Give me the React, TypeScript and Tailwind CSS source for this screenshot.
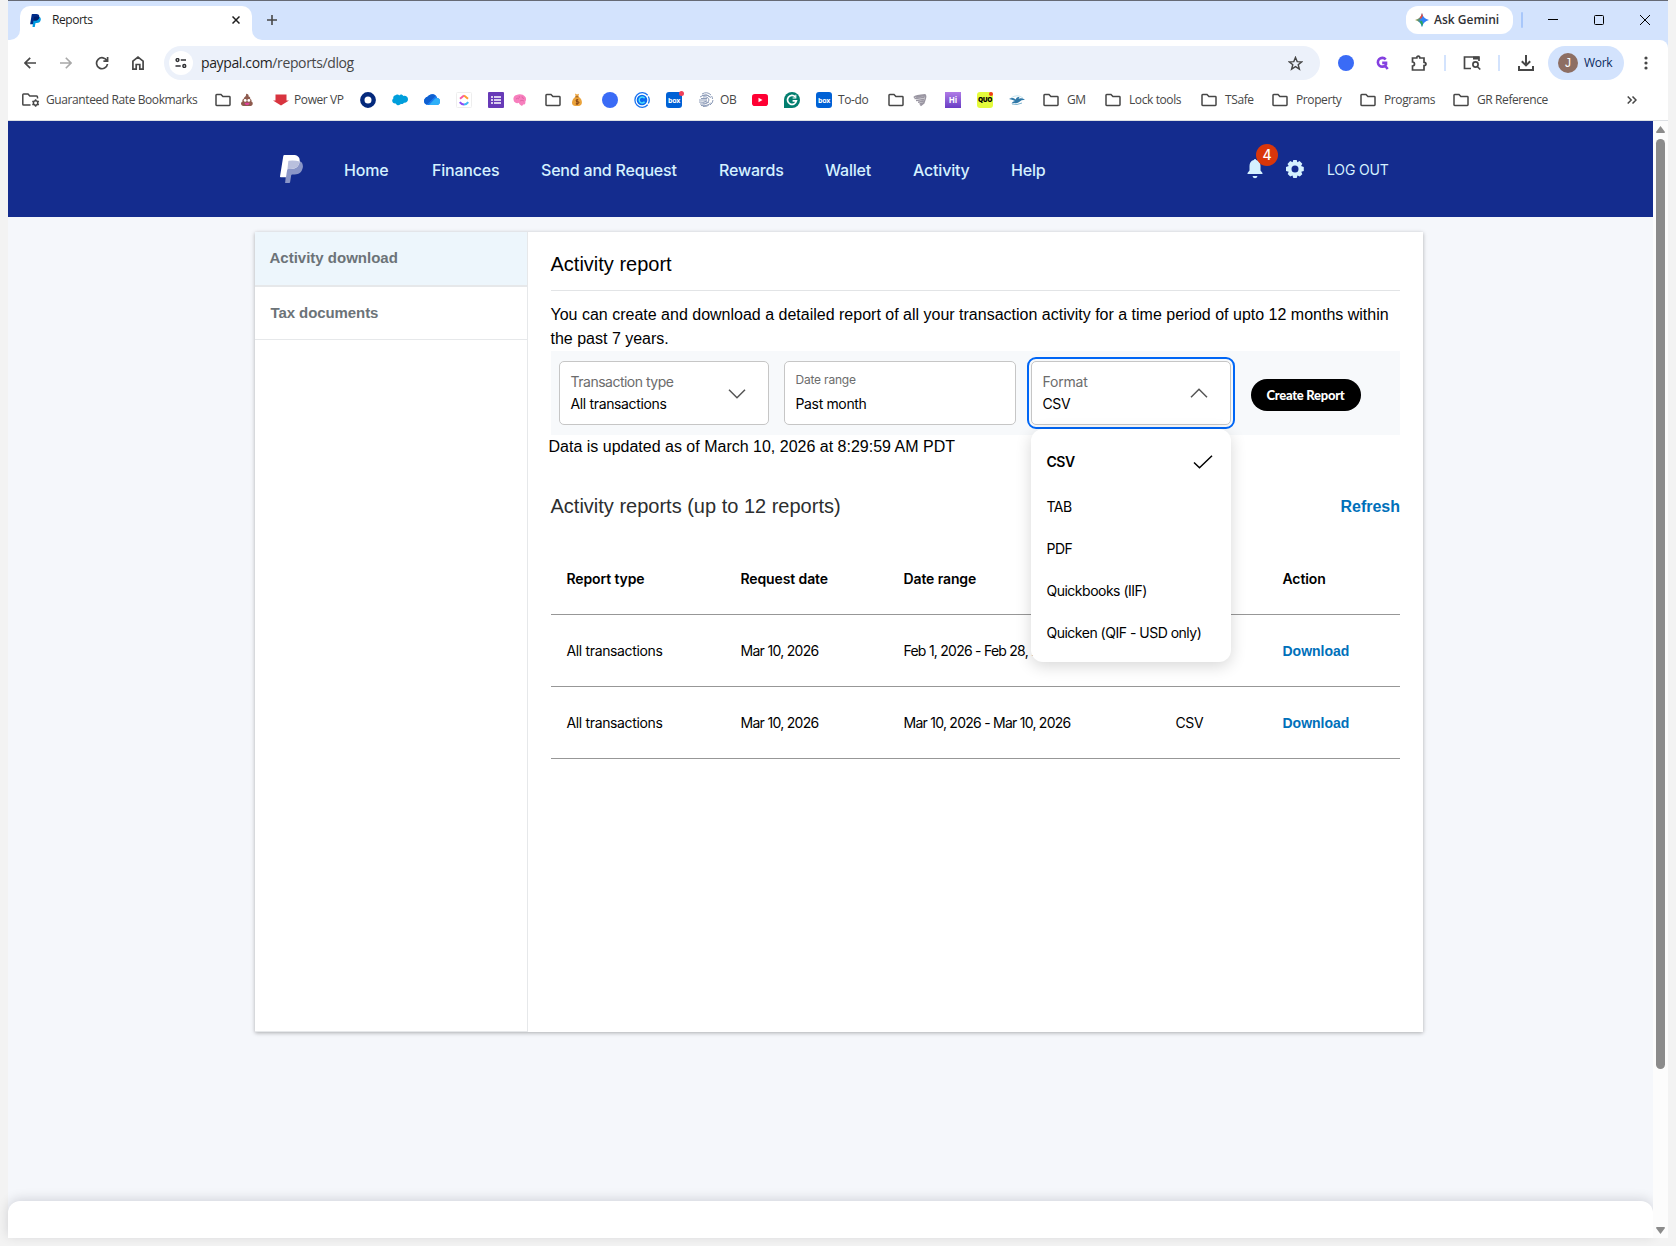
import React from "react";
import { clsx } from "clsx";

const stroke = { fill: "none", stroke: "#474747", strokeWidth: 1.7 };

function FolderIcon() {
  return (
    <svg width="16" height="16" viewBox="0 0 16 16" {...stroke} strokeWidth={1.5} className="shrink-0">
      <path d="M1 12.2V3.2Q1 2.5 1.7 2.5H6l1.9 2h6.4q.7 0 .7.7v7.6q0 .7-.7.7H1.7q-.7 0-.7-.7z" />
    </svg>
  );
}

function ManagedFolderIcon() {
  return (
    <svg width="18" height="16" viewBox="0 0 18 16" {...stroke} strokeWidth={1.5} className="shrink-0">
      <path d="M8.5 13H1.6q-.8 0-.8-.8V2.8Q.8 2 1.6 2H6l1.8 2h6.8q.9 0 .9 1v1.5" />
      <circle cx="13.6" cy="11" r="2.2" />
      <path d="M13.6 7.3v1.4m0 4.6v1.4m-3.2-5.6 1.2.7m4 2.3 1.2.7m0-3.7-1.2.7m-4 2.3-1.2.7" />
    </svg>
  );
}

function PoopIcon() {
  return (
    <svg width="14" height="14" viewBox="0 0 14 14" className="shrink-0">
      <path d="M6 .8c2 .2 3 1.2 2.6 2.6 1.5.3 2 1.4 1.5 2.5 1.5.3 1.8 1.7 1.2 2.7 2 .4 2.2 4.2-.8 4.4h-7C.4 12.8.4 9.2 2.6 8.6 2 7.2 2.6 6.2 3.8 6 3.4 4.2 6.8 3.8 6 .8z" fill="#8d5a4d" />
      <circle cx="5.2" cy="7.4" r="1.400" fill="#fff" />
      <circle cx="8.800" cy="7.400" r="1.400" fill="#fff" />
      <path d="M4.400 9.800h5.400q-.5 2.400-2.700 2.400t-2.700-2.400z" fill="#e0409a" />
    </svg>
  );
}

function PowerIcon() {
  return (
    <svg width="16" height="16" viewBox="0 0 16 16" className="shrink-0">
      <path d="M2.500 2.500h11v6H16l-8 5-8-5h2.500z" fill="#d8343f" />
    </svg>
  );
}

function RingIcon() {
  return (
    <svg width="16" height="16" viewBox="0 0 16 16" className="shrink-0">
      <circle cx="8" cy="8" r="5.700" fill="#fff" stroke="#04297c" strokeWidth="4.400" />
    </svg>
  );
}

function SalesforceIcon() {
  return (
    <svg width="16" height="16" viewBox="0 0 16 16" className="shrink-0">
      <path d="M4 3c1.500-.8 2.700-.2 3.200.5C8.500 2 10.600 2.500 11.200 4c2.400-.8 4.800.8 4.800 3.300 0 2.400-2 3.800-4 3.400-.8 1.200-2.200 1.500-3.200 1-1 2-4.200 2-5-.3C1.800 11.700.2 10.600.2 8.800c0-1 .5-1.800 1.200-2.200C.7 5 2 3.400 4 3z" fill="#009edb" />
    </svg>
  );
}

function OneDriveIcon() {
  return (
    <svg width="16" height="16" viewBox="0 0 16 16" className="shrink-0">
      <path d="M3.500 4.800C6 1 12 1.500 13.300 6c3 .5 3.500 3.500 2.200 5.500-.8 1.200-1.800 1.500-2.800 1.500H4C0 13-1 8.500 1 6.500c.7-.9 1.500-1.500 2.500-1.700z" fill="#1a7cf0" />
      <path d="M3.500 4.800C5.500 2 9.500 1.500 11.800 3.800L2.800 12.700C-.4 11.500-.5 8 1 6.500c.7-.9 1.500-1.500 2.500-1.700z" fill="#0f5fd0" />
      <path d="M5 13l6-6.200q1.500-1.300 3-.6c2.500.8 2.700 3.500 1.500 5.300-.7 1-1.700 1.500-2.700 1.500z" fill="#2fb0f8" />
    </svg>
  );
}

function ClickUpIcon() {
  return (
    <svg width="16" height="16" viewBox="0 0 16 16" fill="none" strokeWidth="2" className="shrink-0">
      <rect x=".5" y=".5" width="15" height="15" rx="1" stroke="#eee" strokeWidth="1" />
      <path d="M4 6.700 8 3.400" stroke="#f85aa8" />
      <path d="M8 3.400l4 3.300" stroke="#ff9b2e" />
      <path d="M3.800 10.200q1.700 2.400 4.200 2.400" stroke="#8a4cf5" />
      <path d="M8 12.600q2.500 0 4.200-2.400" stroke="#42b5f5" />
    </svg>
  );
}

function FormsIcon() {
  return (
    <svg width="16" height="16" viewBox="0 0 16 16" className="shrink-0">
      <rect width="16" height="16" rx="1" fill="#673ab7" />
      <path d="M3 5h2m1 0h7M3 8h2m1 0h7M3 11h2m1 0h7" stroke="#fff" strokeWidth="1.700" />
    </svg>
  );
}

function BrainIcon() {
  return (
    <svg width="14" height="14" viewBox="0 0 14 14" className="shrink-0">
      <path d="M.6 7c-.6-2.400.8-4.800 3-5C6.500.5 10.400 1.500 11.700 3.200 13.600 4.800 13.300 7.500 12.300 8.700c.6 1.800-.8 3.300-2.200 2.800-.5 1.500-2.200 1.600-2.500.4C6.400 11.500 6 10.500 6 9.800 4 10.800.9 9.800.6 7z" fill="#f77fbd" />
      <path d="M3 6q1.500-1.500 3 0m0-3q1 1 0 2m3-1.500q0 2 2 2M7 8q2-1.500 4 0" stroke="#d95a9c" strokeWidth=".7" fill="none" />
    </svg>
  );
}

function MoneyBagIcon() {
  return (
    <svg width="14" height="14" viewBox="0 0 14 14" className="shrink-0">
      <path d="M5 .6l2 .8 2-.6-.8 3C11 5 12 7.500 11.900 9.500c0 2.300-1.500 3.500-3.500 3.500H5.500C3.200 13 1.900 11.800 2 9.500 2 7.500 3.500 5 5.700 3.800z" fill="#eba33b" />
      <path d="M5.300 3.800h3.300" stroke="#9c5a1c" strokeWidth="1" />
      <path d="M8.300 6.800q-2.200-.4-2.200 1t2 1 0 2H5.800M7 6v6" stroke="#7c3c12" strokeWidth=".9" fill="none" />
    </svg>
  );
}

function BlueDot() {
  return <span className="size-4 shrink-0 rounded-full bg-[#3a6bf6]" />;
}

function CalendlyIcon() {
  return (
    <svg width="16" height="16" viewBox="0 0 16 16" fill="none" className="shrink-0">
      <path d="M13.700 3.200A7.300 7.300 0 1 0 13.700 12.800" stroke="#1a73f0" strokeWidth="1.300" />
      <path d="M14.300 4.500a7.300 7.300 0 0 1 0 7" stroke="#1a73f0" strokeWidth="1.300" />
      <circle cx="8" cy="8" r="5.300" fill="#0b6bf0" />
      <path d="M10.600 6.200A3 3 0 1 0 10.600 9.800" stroke="#4fe0f8" strokeWidth="1.500" />
    </svg>
  );
}

function BoxIcon({ dot }: { dot?: boolean }) {
  return (
    <span className="relative flex size-4 shrink-0 items-center justify-center rounded-[3px] bg-[#0061d5] font-['Open_Sans',sans-serif] text-[7px] font-bold leading-none tracking-[-0.3px] text-white">
      box
      {dot && <span className="absolute -right-0.5 -top-px size-[5px] rounded-full bg-[#f0405a]" />}
    </span>
  );
}

function GlobeIcon() {
  return (
    <svg width="16" height="16" viewBox="0 0 16 16" fill="none" stroke="#8c9bb8" strokeWidth="1" className="shrink-0">
      <path d="M4 2q5-3 9 1M2 5q6-4 10 0M5 5q5-1 6 3-1 4-6 3M1 8h8M1 10q4 1 8-1M2 12q5 1 9-2M5 14.500q5 1 8-4M12 13q3-2 3-5M13.500 4q1 1 1 3M4 3.500q5-2 9 2M3 6.500h6M3 13.500q4 1 8-1" />
    </svg>
  );
}

function YouTubeIcon() {
  return (
    <svg width="16" height="16" viewBox="0 0 16 16" className="shrink-0">
      <rect y="2" width="16" height="12" rx="2.800" fill="#ff0033" />
      <path d="M6.500 5.700v4.600L10.500 8z" fill="#fff" />
    </svg>
  );
}

function GrammarlyIcon() {
  return (
    <svg width="16" height="16" viewBox="0 0 16 16" fill="none" className="shrink-0">
      <path d="M0 16V8a8 8 0 1 1 8 8z" fill="#027e6f" />
      <path d="M11.300 4.800a4.500 4.500 0 1 0 1.100 4.100H8.600" stroke="#fff" strokeWidth="1.700" />
      <path d="M11.800 2.800v3.200H8.600" stroke="#fff" strokeWidth="1.100" />
    </svg>
  );
}

function TornadoIcon() {
  return (
    <svg width="14" height="14" viewBox="0 0 14 14" fill="none" stroke="#9a96a2" strokeWidth="1.500" className="shrink-0">
      <path d="M.8 4.500Q3 2.300 12 1.800 13.300 3 12 6.500L10.800 10 7.500 12.800M1.500 5.600l10-1M3 7.400l8-.8M5 9.200l5.500-1M6.500 11l4-1M3 3.700l9-.9" />
    </svg>
  );
}

function HiIcon() {
  return (
    <span className="flex size-4 shrink-0 items-center justify-center bg-linear-to-b from-[#b07be6] to-[#6a3cc4] font-['Open_Sans',sans-serif] text-[8px] font-bold leading-none text-white">
      Hi
    </span>
  );
}

function QuoIcon() {
  return (
    <span className="relative flex size-4 shrink-0 items-center justify-center rounded-[3px] bg-[#e4fb3c] font-['Open_Sans',sans-serif] text-[6.5px] font-extrabold leading-none tracking-[-0.5px] text-black">
      QUO
      <span className="absolute right-0 top-0 size-1 rounded-full bg-[#f03a1c]" />
    </span>
  );
}

function BirdIcon() {
  return (
    <svg width="16" height="16" viewBox="0 0 16 16" fill="none" className="shrink-0">
      <path d="M2 6Q8 1.500 14 6" stroke="#b8dcea" strokeWidth=".8" />
      <path d="M0 7q4-2 6.500.5Q8 4 10.500 5.200L9.500 6.800q3-1.300 6.500 1-4 .2-5.500 2-2 2-5 1.200-2 0-3 .6 1-2.400 3.500-2.600Q3 7.600 0 7z" fill="#2f78a8" />
      <path d="M3 12q5 1.500 10-1" stroke="#7fb4d0" strokeWidth="1" />
    </svg>
  );
}

interface Bookmark {
  icon: React.ReactNode;
  extra?: React.ReactNode;
  label?: string;
  width: string;
  text?: string;
}

const bookmarks: Bookmark[] = [
  { icon: <ManagedFolderIcon />, label: "Guaranteed Rate Bookmarks", width: "w-[193px]", text: "ml-1.5" },
  { icon: <FolderIcon />, extra: <PoopIcon />, width: "w-[58px]" },
  { icon: <PowerIcon />, label: "Power VP", width: "w-[87px]", text: "ml-[5px]" },
  { icon: <RingIcon />, width: "w-8" },
  { icon: <SalesforceIcon />, width: "w-8" },
  { icon: <OneDriveIcon />, width: "w-8" },
  { icon: <ClickUpIcon />, width: "w-8" },
  { icon: <FormsIcon />, extra: <BrainIcon />, width: "w-[57px]" },
  { icon: <FolderIcon />, extra: <MoneyBagIcon />, width: "w-[57px]" },
  { icon: <BlueDot />, width: "w-8" },
  { icon: <CalendlyIcon />, width: "w-8" },
  { icon: <BoxIcon dot />, width: "w-8" },
  { icon: <GlobeIcon />, label: "OB", width: "w-[54px]", text: "ml-1.5" },
  { icon: <YouTubeIcon />, width: "w-8" },
  { icon: <GrammarlyIcon />, width: "w-8" },
  { icon: <BoxIcon />, label: "To-do", width: "w-[72px]", text: "ml-1.5" },
  { icon: <FolderIcon />, extra: <TornadoIcon />, width: "w-[57px]" },
  { icon: <HiIcon />, width: "w-8" },
  { icon: <QuoIcon />, width: "w-8" },
  { icon: <BirdIcon />, width: "w-[34px]" },
  { icon: <FolderIcon />, label: "GM", width: "w-[62px]", text: "ml-2" },
  { icon: <FolderIcon />, label: "Lock tools", width: "w-24", text: "ml-2" },
  { icon: <FolderIcon />, label: "TSafe", width: "w-[71px]", text: "ml-2" },
  { icon: <FolderIcon />, label: "Property", width: "w-[88px]", text: "ml-2" },
  { icon: <FolderIcon />, label: "Programs", width: "w-[93px]", text: "ml-2" },
  { icon: <FolderIcon />, label: "GR Reference", width: "w-[174px]", text: "ml-2" },
];

function PayPalMark({ className, front, back, overlap }: { className: string; front: string; back: string; overlap: string }) {
  return (
    <svg viewBox="0 0 23 28" className={className}>
      <path d="M7.500 5.500h9.200c4.300 0 6.800 2.800 6.100 7-.8 4.600-3.700 6.900-8.100 6.900h-2.500q-.8 0-1 .8l-1.100 7q-.1.800-.9.800H5.100z" fill={back} />
      <path d="M4.400 0h8.800c4.600 0 7.100 2.500 6.400 6.800-.8 4.800-3.900 7.200-8.600 7.200H8.200q-.8 0-1 .8l-1.200 7.400H.7q-.8 0-.7-.8L3.300 1Q3.500 0 4.400 0z" fill={front} />
      <path d="M8.800 5.700q5.600-.9 10.800.9c-.6 4.900-3.800 7.400-8.600 7.400H8.200q-.5 0-.8.400L8.300 6.300q0-.5.500-.6z" fill={overlap} />
    </svg>
  );
}

function TabStrip() {
  return (
    <div className="flex h-[39px] bg-[#d3e3fd] pt-[5px]">
      <div className="flex h-[34px] w-3 items-end bg-white">
        <div className="h-full w-3 rounded-br-[10px] bg-[#d3e3fd]" />
      </div>
      <div className="flex h-[34px] w-[232px] items-center rounded-t-[10px] bg-white pb-1.5 pl-2.5 pr-3">
        <PayPalMark className="h-[13px] w-[11px]" front="#002c8a" back="#009be1" overlap="#001f6b" />
        <span className="ml-[11px] flex-1 text-xs tracking-[-0.45px] text-[#1f1f1f]">Reports</span>
        <svg width="8" height="8" viewBox="0 0 8 8" stroke="#1f1f1f" strokeWidth="1.500">
          <path d="M.5.500l7 7m0-7-7 7" />
        </svg>
      </div>
      <div className="h-[34px] w-3 bg-white">
        <div className="h-full w-3 rounded-bl-[10px] bg-[#d3e3fd]" />
      </div>
      <svg width="10" height="10" viewBox="0 0 10 10" stroke="#474747" strokeWidth="1.600" className="ml-[3px] mt-[9px]">
        <path d="M5 0v10M0 5h10" />
      </svg>
      <div className="ml-auto flex h-7 w-[107px] items-center rounded-xl bg-white pl-[9px]">
        <svg width="14" height="14" viewBox="0 0 14 14">
          <defs>
            <linearGradient id="gem" x1="0" x2="1" y1="0" y2=".3">
              <stop offset="0" stopColor="#f6b61d" />
              <stop offset=".4" stopColor="#4f8f7c" />
              <stop offset=".55" stopColor="#3286fb" />
              <stop offset="1" stopColor="#2f7bf5" />
            </linearGradient>
          </defs>
          <path d="M7 0Q8.300 5.700 14 7 8.300 8.300 7 14 5.700 8.300 0 7 5.700 5.700 7 0z" fill="url(#gem)" />
          <path d="M7 0q.3 1.500 1 2.800L6.500 5.500 4.200 5.400Q6.400 3.700 7 0z" fill="#e8483e" />
          <path d="M4.500 8.700 7 7.500l1 3.500Q7.300 12.300 7 14 6.400 10.500 4.500 8.700z" fill="#2ca65a" />
        </svg>
        <span className="ml-[5px] text-xs font-semibold text-[#303134]">Ask Gemini</span>
      </div>
      <div className="ml-2 mt-1.5 h-4 w-0.5 rounded-full bg-[#a8c7fa]" />
      <div className="ml-[25px] mt-[9px] flex w-[120px] gap-9">
        <svg width="10" height="10" viewBox="0 0 10 10" stroke="#000">
          <path d="M0 4.500h10" />
        </svg>
        <svg width="10" height="10" viewBox="0 0 10 10" stroke="#000" fill="none">
          <rect x=".5" y=".5" width="9" height="9" rx="1" />
        </svg>
        <svg width="10" height="10" viewBox="0 0 10 10" stroke="#000">
          <path d="M0 0l10 10m0-10L0 10" />
        </svg>
      </div>
    </div>
  );
}

function Toolbar() {
  return (
    <div className="bg-[#d3e3fd]">
      <div className="flex h-[46px] items-center rounded-tr-lg bg-white pl-4">
        <svg width="12" height="12" viewBox="0 0 12 12" {...stroke}>
          <path d="M12 6H1.200M6.200.8 1 6l5.200 5.200" />
        </svg>
        <svg width="12" height="12" viewBox="0 0 12 12" fill="none" stroke="#a8a8a8" strokeWidth="1.600" className="ml-6">
          <path d="M0 6h10.800M5.800.8 11 6l-5.200 5.200" />
        </svg>
        <svg width="14" height="14" viewBox="0 0 14 14" {...stroke} className="ml-[23px]">
          <path d="M12 4.800A5.500 5.500 0 1 0 12.500 8M12.600 1v4.200H8.400" />
        </svg>
        <svg width="12" height="14" viewBox="0 0 12 14" {...stroke} className="ml-[23px]">
          <path d="M.9 13.100V5.200L6 1.200l5.100 4v7.900H7.800V8.500H4.200v4.600z" />
        </svg>
        <div className="ml-5 flex h-[34px] w-[1156px] items-center rounded-full bg-[#ecf1fa] pl-[5px] pr-[17px]">
          <div className="flex size-6 items-center justify-center rounded-full bg-white">
            <svg width="12" height="10" viewBox="0 0 12 10" fill="none" stroke="#303134" strokeWidth="1.500">
              <circle cx="2.500" cy="2" r="1.400" />
              <path d="M5.800 2H11M.5 8h5.200" />
              <circle cx="9.300" cy="8" r="1.400" />
            </svg>
          </div>
          <span className="ml-2 flex-1 text-sm tracking-[-0.37px] text-[#474747]">
            <span className="text-[#1f1f1f]">paypal.com</span>/reports/dlog
          </span>
          <svg width="15" height="15" viewBox="0 0 15 15" {...stroke} strokeWidth={1.4}>
            <path d="M7.500 1.400l1.700 4.200 4.500.3-3.500 2.900 1.200 4.400-3.900-2.500-3.900 2.500 1.200-4.400L1.300 5.900l4.500-.3z" />
          </svg>
        </div>
        <div className="ml-[18px] flex">
          <BlueDot />
        </div>
        <svg width="13" height="14" viewBox="0 0 13 14" fill="none" stroke="#8440e0" strokeWidth="2.600" className="ml-[22px]">
          <path d="M9.700 3.500A4.400 4.400 0 1 0 10 8.600V6.900H6.200M9.200 10l2.500 3" />
        </svg>
        <svg width="17" height="17" viewBox="0 0 17 17" {...stroke} className="ml-[22px]">
          <path d="M1.500 3h4.300q0-1.800 1.500-1.800T8.800 3H13v4.300q2 .1 2 1.600T13 10.500V15H1.500v-4q2-.2 2-2t-2-2z" />
        </svg>
        <div className="ml-4 h-4 w-0.5 bg-[#d3e3fd]" />
        <svg width="18" height="16" viewBox="0 0 18 16" {...stroke} className="ml-[17px]">
          <path d="M8 13.500H1.500V2H16v4" />
          <path d="M10 3h6" strokeWidth="3" />
          <circle cx="12.500" cy="9.500" r="2.600" />
          <path d="M14.300 11.500l3 3" />
        </svg>
        <div className="ml-[17px] h-4 w-0.5 bg-[#d3e3fd]" />
        <svg width="16" height="16" viewBox="0 0 16 16" {...stroke} strokeWidth={2} className="ml-[18px]">
          <path d="M8 0v10M3.800 6.200 8 10.400l4.200-4.200M1 11v4h14v-4" />
        </svg>
        <div className="ml-3.5 flex h-[34px] w-[76px] items-center rounded-full bg-[#d3e3fd] pl-2.5">
          <span className="flex size-5 items-center justify-center rounded-full bg-[#8d6e63] font-['Liberation_Sans',Arial,sans-serif] text-xs leading-none text-white">
            J
          </span>
          <span className="ml-1.5 text-xs font-medium tracking-[-0.3px] text-[#0a2a5e]">Work</span>
        </div>
        <svg width="4" height="14" viewBox="0 0 4 14" fill="#474747" className="ml-5">
          <circle cx="2" cy="2" r="1.600" />
          <circle cx="2" cy="7" r="1.600" />
          <circle cx="2" cy="12" r="1.600" />
        </svg>
      </div>
    </div>
  );
}

function BookmarkBar() {
  return (
    <div className="flex h-[35px] items-center border-b border-[#dcdfe3] bg-white pb-1.5 pl-3.5">
      {bookmarks.map((b, i) => (
        <div key={i} className={clsx("flex shrink-0 items-center whitespace-nowrap", b.width)}>
          {b.icon}
          {b.extra && <span className="ml-[9px] flex">{b.extra}</span>}
          {b.label && <span className={clsx("text-xs leading-4 tracking-[-0.4px] text-[#474747]", b.text)}>{b.label}</span>}
        </div>
      ))}
      <svg width="10" height="8" viewBox="0 0 10 8" {...stroke} strokeWidth={1.5}>
        <path d="M.7.500 4.200 4 .7 7.500M5.500.500 9 4 5.500 7.500" />
      </svg>
    </div>
  );
}

const navItems = [
  { label: "Home", width: "w-[88px]" },
  { label: "Finances", width: "w-[109px]" },
  { label: "Send and Request", width: "w-[178px]" },
  { label: "Rewards", width: "w-[106px]" },
  { label: "Wallet", width: "w-[88px]" },
  { label: "Activity", width: "w-[98px]" },
  { label: "Help", width: "w-[236px]" },
];

function SiteHeader() {
  return (
    <header className="flex h-24 items-center bg-[#142c8e] pl-[272px] text-[#d5f1ff]">
      <PayPalMark className="h-7 w-[23px]" front="#ffffff" back="#8a96c7" overlap="#b9c0dd" />
      <nav className="ml-[41px] flex pt-px text-base font-medium tracking-[-0.2px]">
        {navItems.map((item) => (
          <a key={item.label} className={clsx("whitespace-nowrap", item.width)}>
            {item.label}
          </a>
        ))}
      </nav>
      <div className="relative">
        <svg width="16" height="20" viewBox="0 0 16 20" fill="#d5f1ff">
          <path d="M8 0q1 0 1.200 1C12.200 1.700 13.500 4 13.500 7v4.500l2 2.500q.4 1-.5 1H1q-.9 0-.5-1l2-2.500V7C2.500 4 3.800 1.700 6.800 1 7 0 8 0 8 0z" />
          <path d="M5.500 17h5q-.5 2.200-2.500 2.200T5.500 17z" />
        </svg>
        <span className="absolute -top-[15px] left-[9px] flex size-[22px] items-center justify-center rounded-full bg-[#d9360b] text-sm font-medium text-white">
          4
        </span>
      </div>
      <svg width="18" height="18" viewBox="0 0 18 18" fill="#d5f1ff" className="ml-[23px]">
        <path fillRule="evenodd" d="M7.300 0h3.400l.6 2.300 2.300-1.200 2.700 2.700-1.200 2.200 2.700.9v4l-2.500.8 1 2.500-2.500 2.200-2.300-1-.8 2.600H7.300l-.8-2.500-2.300 1-2.500-2.400 1-2.400L0 11V7l2.700-.9L1.500 3.900l2.700-2.800 2.400 1.200zM9 5.500a3.500 3.500 0 1 0 0 7 3.500 3.500 0 0 0 0-7z" />
      </svg>
      <a className="ml-[23px] whitespace-nowrap pt-px text-sm tracking-[-0.15px]">LOG OUT</a>
    </header>
  );
}

function Sidebar() {
  return (
    <aside className="flex w-[273px] flex-col border-b border-r border-[#e6e8ea] font-['Liberation_Sans',Arial,sans-serif] text-[15px] font-bold text-[#6c7378]">
      <div className="flex h-[55px] items-center border-b-2 border-[#e6e8ea] bg-[#edf6fc] pl-[14.5px]">Activity download</div>
      <div className="flex h-[53px] items-center border-b border-[#e6e8ea] pl-[15.5px] tracking-[-0.08px]">Tax documents</div>
    </aside>
  );
}

const formats = ["CSV", "TAB", "PDF", "Quickbooks (IIF)", "Quicken (QIF - USD only)"];

function FormatMenu({ selected }: { selected: string }) {
  return (
    <ul className="absolute -left-px top-[67px] z-10 h-[233px] w-[200px] rounded-xl bg-white pt-[9px] shadow-[0_4px_16px_rgba(0,0,0,0.16)]">
      {formats.map((f) => (
        <li
          key={f}
          className={clsx(
            "flex items-center justify-between whitespace-nowrap pl-4 pr-[18px] tracking-[-0.5px]",
            f === selected ? "h-12 font-semibold" : "h-[42px]"
          )}
        >
          {f}
          {f === selected && (
            <svg width="20" height="14" viewBox="0 0 20 14" fill="none" stroke="#000" strokeWidth="1.500">
              <path d="M1 7.500l5.500 5.300L19 .8" />
            </svg>
          )}
        </li>
      ))}
    </ul>
  );
}

function Filters() {
  const box = "h-16 rounded-[5px] border border-[#c6c6c6] bg-white";
  return (
    <div className="flex h-[84px] bg-[#f7f9fb] pl-2 pt-2.5 text-sm text-black">
      <div className={clsx(box, "flex w-[210px] items-center justify-between pl-[11px] pr-[22px]")}>
        <div>
          <div className="leading-[22px] tracking-[-0.5px] text-[#6c6c6c]">Transaction type</div>
          <div className="leading-[22px] tracking-[-0.35px]">All transactions</div>
        </div>
        <svg width="18" height="10" viewBox="0 0 18 10" fill="none" stroke="#545454" strokeWidth="1.500" className="mt-0.5">
          <path d="M1 .8l8 8 8-8" />
        </svg>
      </div>
      <div className={clsx(box, "ml-[15px] w-[232px] pl-[11px] pt-[7px]")}>
        <div className="text-xs leading-[22px] tracking-[-0.2px] text-[#6c6c6c]">Date range</div>
        <div className="leading-[26px] tracking-[-0.35px]">Past month</div>
      </div>
      <div className={clsx(box, "relative ml-[15px] flex w-[200px] items-center justify-between pl-[11px] pr-[22px] outline-2 outline-offset-2 outline-[#0066f5]")}>
        <div>
          <div className="leading-[22px] tracking-[-0.2px] text-[#6c6c6c]">Format</div>
          <div className="leading-[22px] tracking-[-0.4px]">CSV</div>
        </div>
        <svg width="18" height="10" viewBox="0 0 18 10" fill="none" stroke="#545454" strokeWidth="1.500">
          <path d="M1 9.200l8-8 8 8" />
        </svg>
        <FormatMenu selected="CSV" />
      </div>
      <button className="ml-5 mt-[18px] h-8 w-[110px] whitespace-nowrap rounded-full bg-black font-['Lato',sans-serif] text-[13px] font-black tracking-[-0.27px] text-white">
        Create Report
      </button>
    </div>
  );
}

const reports = [
  { type: "All transactions", requested: "Mar 10, 2026", range: "Feb 1, 2026 - Feb 28, 2026", format: "CSV" },
  { type: "All transactions", requested: "Mar 10, 2026", range: "Mar 10, 2026 - Mar 10, 2026", format: "CSV" },
];

const cols = "grid h-[72px] grid-cols-[174px_163px_272px_107px_1fr] items-center border-b border-[#979797] pl-4 whitespace-nowrap";

function ReportsTable() {
  return (
    <div className="text-sm text-black">
      <div className={clsx(cols, "font-semibold tracking-[-0.12px]")}>
        <span>Report type</span>
        <span>Request date</span>
        <span>Date range</span>
        <span>Format</span>
        <span>Action</span>
      </div>
      {reports.map((r) => (
        <div key={r.range} className={cols}>
          <span className="tracking-[-0.35px]">{r.type}</span>
          <span className="tracking-[-0.7px]">{r.requested}</span>
          <span className="tracking-[-0.75px]">{r.range}</span>
          <span className="tracking-[-0.4px]">{r.format}</span>
          <a className="font-['Liberation_Sans',Arial,sans-serif] font-bold text-[#0070ba]">Download</a>
        </div>
      ))}
    </div>
  );
}

function Scrollbar() {
  return (
    <div className="flex w-[15px] flex-col items-center bg-[#fcfcfc] pb-1 pt-[5px]">
      <svg width="9" height="7" viewBox="0 0 9 7" fill="#8b8b8b">
        <path d="M4.500 0 9 6q0 1-1 1H1Q0 7 0 6z" />
      </svg>
      <div className="mt-1.5 h-[930px] w-[9px] rounded-full bg-[#8b8b8b]" />
      <svg width="9" height="7" viewBox="0 0 9 7" fill="#8b8b8b" className="mt-auto">
        <path d="M4.500 7 0 1q0-1 1-1h7q1 0 1 1z" />
      </svg>
    </div>
  );
}

export default function App() {
  return (
    <div className="h-[1246px] w-[1676px] overflow-hidden bg-[#f3f3f3] px-2 font-['Open_Sans','Segoe_UI',sans-serif]">
      <div className="flex h-[1238px] flex-col border-t border-[#666a75]">
        <TabStrip />
        <Toolbar />
        <BookmarkBar />
        <div className="flex flex-1 font-['Inter',Helvetica,sans-serif]">
          <div className="flex flex-1 flex-col bg-[#f5f7fb]">
            <SiteHeader />
            <div className="ml-[247px] mt-[15px] flex h-[800px] w-[1168px] bg-white shadow-[0_1px_4px_rgba(0,0,0,0.3)]">
              <Sidebar />
              <main className="w-[872px] pl-[22.5px] font-['Liberation_Sans',Arial,sans-serif] text-base text-black">
                <h1 className="h-[59px] border-b border-[#e2e4e6] pt-[17px] text-xl leading-[30px]">Activity report</h1>
                <p className="h-[60px] pt-3">
                  You can create and download a detailed report of all your transaction activity for a time period of upto 12 months within the past 7 years.
                </p>
                <div className="font-['Inter',Helvetica,sans-serif]">
                  <Filters />
                </div>
                <p className="-ml-0.5">Data is updated as of March 10, 2026 at 8:29:59 AM PDT</p>
                <div className="mt-7 flex h-14 items-start justify-between pt-1">
                  <h2 className="text-xl leading-[30px] text-[#2c2e2f]">Activity reports (up to 12 reports)</h2>
                  <a className="pt-px font-bold leading-[30px] text-[#0070ba]">Refresh</a>
                </div>
                <div className="font-['Inter',Helvetica,sans-serif]">
                  <ReportsTable />
                </div>
              </main>
            </div>
            <div className="mt-auto h-[37px] rounded-t-xl bg-white shadow-[0_-2px_12px_rgba(0,0,30,0.14)]" />
          </div>
          <Scrollbar />
        </div>
      </div>
    </div>
  );
}
